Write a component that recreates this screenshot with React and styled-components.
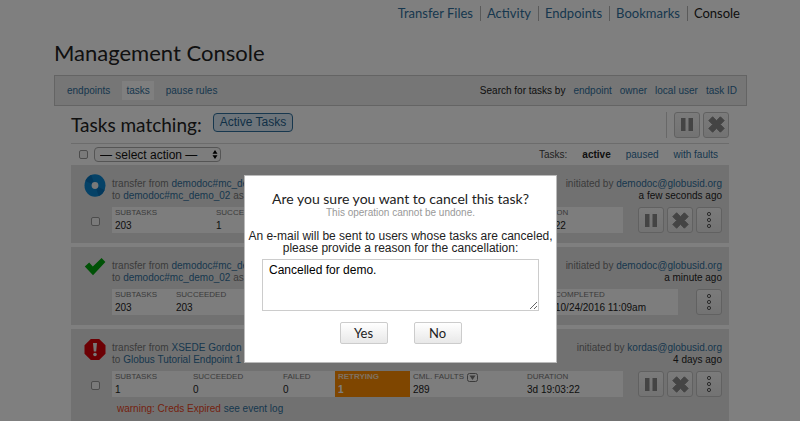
import React from "react";
import styled, { createGlobalStyle } from "styled-components";

const sans = `"Liberation Sans", Arial, sans-serif`;
const display = `Lato, "Open Sans", sans-serif`;
const link = "#2f6f9c";

const GlobalStyle = createGlobalStyle`
  * { box-sizing: border-box; }
  body { margin: 0; background: #fff; color: #222; font: 10px/12px ${sans}; }
  button, input, select, textarea { font-family: inherit; margin: 0; }
  h1, h2, p, dl, dd, dt { margin: 0; }
  svg { display: block; }
`;

const Page = styled.div`
  max-width: 694px;
  margin: 0 auto;
  padding-left: 1px;
`;
const Link = styled.a`
  color: ${(p) => (p.$current ? "#222" : link)};
  font-weight: ${(p) => (p.$strong ? 700 : 400)};
  text-decoration: none;
`;
const SiteNav = styled.nav`
  display: flex;
  justify-content: flex-end;
  padding: 6px 7px 0 0;
  font: 13px/14px ${display};
  a { padding: 0 7px 1px 6px; border-left: 1px solid #b4b4b4; }
  a:first-child { border-left: 0; }
  a:last-child { padding-right: 0; }
`;
const PageTitle = styled.h1`
  margin: 19px 0 9px;
  font: 400 22px/26px ${display};
`;
const TabBar = styled.div`
  display: flex;
  justify-content: space-between;
  align-items: center;
  height: 31px;
  padding: 0 9px 0 8px;
  background: #ececec;
  border: 1px solid #c8c8c8;
`;
const Tabs = styled.nav`
  display: flex;
  gap: 8px;
`;
const Tab = styled(Link)`
  padding: 4px 4px 3px;
  background: ${(p) => (p.$selected ? "#fff" : "transparent")};
`;
const SearchLinks = styled.div`
  display: flex;
  gap: 8px;
`;
const Content = styled.main`
  padding: 0 18px 0 17px;
`;
const Heading = styled.div`
  display: flex;
  align-items: center;
  height: 38px;
  border-bottom: 1px solid #d8d8d8;
`;
const MatchTitle = styled.h2`
  margin-right: 11px;
  font: 400 19px/24px ${display};
`;
const Chip = styled.button`
  height: 19px;
  margin-bottom: 5px;
  padding: 0 6px;
  border: 1px solid ${link};
  border-radius: 4px;
  background: #dcebf7;
  color: #1f5f8c;
  font-size: 12px;
  line-height: 14px;
`;
const Actions = styled.div`
  display: flex;
  flex: none;
  gap: 3px;
  margin-left: auto;
  padding-left: 7px;
  border-left: 1px solid ${(p) => (p.$divided ? "#d0d0d0" : "transparent")};
`;
const IconButton = styled.button`
  display: grid;
  place-items: center;
  width: 26px;
  height: 26px;
  padding: 0;
  border: 1px solid #c2c2c2;
  border-radius: 3px;
  background: linear-gradient(#f6f6f6, #e6e6e6);
  color: #888;
`;
const FilterRow = styled.div`
  display: flex;
  align-items: center;
  height: 21px;
  padding: 0 11px 0 8px;
`;
const Check = styled.input`
  appearance: none;
  width: 9px;
  height: 9px;
  border: 1px solid #999;
  border-radius: 2px;
  background: #f4f4f4;
`;
const SelectWrap = styled.div`
  position: relative;
  width: 127px;
  margin-left: 6px;
  svg { position: absolute; right: 3px; top: 3px; pointer-events: none; }
`;
const Select = styled.select`
  appearance: none;
  display: block;
  width: 100%;
  height: 15px;
  padding: 0 5px;
  border: 1px solid #aaa;
  border-radius: 4px;
  background: #fbfbfb;
  color: #111;
  font-size: 12px;
  line-height: 12px;
`;
const Filters = styled.nav`
  display: flex;
  gap: 15px;
  margin-left: auto;
  color: #444;
`;
const TaskList = styled.div`
  display: grid;
  gap: 4px;
`;
const Card = styled.article`
  display: grid;
  grid-template-columns: 41px minmax(0, 1fr);
  padding: 13px 7px 10px 0;
  background: #e3e3e3;
`;
const Status = styled.div`
  display: flex;
  flex-direction: column;
  align-items: center;
  gap: 20px;
  padding-left: 7px;
  svg { margin-top: -4px; }
`;
const Summary = styled.div`
  display: flex;
  justify-content: space-between;
  color: #777;
`;
const Initiated = styled.div`
  text-align: right;
`;
const Time = styled.div`
  color: #222;
`;
const Details = styled.div`
  display: flex;
  align-items: flex-start;
  margin-top: 5px;
`;
const Stats = styled.dl`
  display: grid;
  flex: 1;
  max-width: ${(p) => p.$max}px;
  grid-template-columns: ${(p) => p.$columns};
  height: 26px;
  background: #fafafa;
`;
const Stat = styled.div`
  min-width: 0;
  padding: 1px 3px 0;
  white-space: nowrap;
  background: ${(p) => (p.$hot ? "#ff8c00" : "transparent")};
  color: ${(p) => (p.$hot ? "#fff" : "#222")};
  dt { display: flex; gap: 3px; align-items: center; font-size: 8px; line-height: 10px;
    color: ${(p) => (p.$hot ? "#ffe3c2" : "#777")}; font-weight: ${(p) => (p.$hot ? 700 : 400)}; }
  dd { line-height: 15px; font-weight: ${(p) => (p.$hot ? 700 : 400)}; }
`;
const Warning = styled.p`
  margin: 6px 0 0 5px;
  color: #e8431c;
`;
const Overlay = styled.div`
  position: fixed;
  inset: 0;
  display: flex;
  justify-content: center;
  align-items: flex-start;
  padding: 175px 0 0 1px;
  background: rgba(0, 0, 0, 0.5);
`;
const Dialog = styled.form`
  width: 313px;
  padding: 14px 0 18px;
  border: 1px solid #bbb;
  background: #fff;
  text-align: center;
`;
const DialogTitle = styled.h2`
  font: 400 14px/17px ${display};
`;
const DialogNote = styled.p`
  line-height: 12px;
  color: #999;
`;
const DialogLabel = styled.label`
  display: block;
  margin-top: 11px;
  font-size: 12px;
  line-height: 12px;
`;
const Reason = styled.textarea`
  display: block;
  width: 277px;
  height: 52px;
  margin: 5px auto 11px;
  padding: 4px 6px;
  border: 1px solid #ccc;
  color: #000;
  font-size: 12px;
  line-height: 13px;
  resize: vertical;
`;
const DialogButtons = styled.div`
  display: flex;
  justify-content: center;
  gap: 26px;
`;
const DialogButton = styled.button`
  width: 48px;
  height: 22px;
  padding: 0;
  border: 1px solid #ccc;
  border-radius: 2px;
  background: linear-gradient(#fff, #e8e8e8);
  color: #222;
  font: 13px/18px ${display};
`;

const Pause = () => (
  <svg width="12" height="13" viewBox="0 0 12 13" fill="currentColor"><path d="M0 0h4.5v13H0zM7.5 0H12v13H7.5z" /></svg>
);
const Cross = () => (
  <svg width="17" height="17" viewBox="0 0 17 17" fill="currentColor">
    <path d="M4.6.8 8.5 4.7 12.4.8 16.2 4.6 12.3 8.5 16.2 12.4 12.4 16.2 8.5 12.3 4.6 16.2.8 12.4 4.7 8.5.8 4.6z" stroke="currentColor" strokeLinejoin="round" />
  </svg>
);
const More = () => (
  <svg width="6" height="18" viewBox="0 0 6 18" fill="none" stroke="#555" strokeWidth="1">
    <circle cx="3" cy="3" r="1.6" /><circle cx="3" cy="9" r="1.6" /><circle cx="3" cy="15" r="1.6" />
  </svg>
);
const ActiveIcon = () => (
  <svg width="22" height="23" viewBox="0 0 22 23">
    <ellipse cx="11" cy="11.5" rx="10.5" ry="11.3" fill="#0b84cf" />
    <path d="M11 11.5 7.2.9A10.5 11.3 0 0 0 1.4 7zM11 11.5l3.8 10.6a10.5 11.3 0 0 0 5.8-6.1z" fill="#0671b8" />
    <circle cx="11" cy="11.5" r="3.4" fill="#f2f2f2" />
  </svg>
);
const DoneIcon = () => (
  <svg width="22" height="23" viewBox="0 0 22 23"><path d="m.8 10.5 4.4-4 3.6 4L17.6 2l3.8 4L9 19.3z" fill="#00a40c" /></svg>
);
const ErrorIcon = () => (
  <svg width="22" height="23" viewBox="0 0 22 23">
    <path d="M6.8 1h8.4l6.3 6.3v8.4L15.2 22H6.8L.5 15.7V7.3z" fill="#d90008" />
    <path d="M9 5h4l-.8 8.5H9.8z" fill="#eee" /><circle cx="11" cy="16.5" r="1.8" fill="#eee" />
  </svg>
);
const FaultMenu = () => (
  <svg width="11" height="9" viewBox="0 0 11 9"><rect x=".5" y=".5" width="10" height="8" rx="2" fill="none" stroke="#777" /><path d="M2.5 2.5h6L5.5 7z" fill="#777" /></svg>
);

const tasks = [
  {
    id: 1, icon: <ActiveIcon />, selectable: true, from: "demodoc#mc_demo_01", to: "demodoc#mc_demo_02", tail: " as",
    owner: "demodoc@globusid.org", time: "a few seconds ago", controls: true,
    max: 511, columns: "101px 1fr 99px",
    stats: [["SUBTASKS", "203"], ["SUCCEEDED", "1"], ["DURATION", "00:00:22"]],
  },
  {
    id: 2, icon: <DoneIcon />, from: "demodoc#mc_demo_01", to: "demodoc#mc_demo_02", tail: " as",
    owner: "demodoc@globusid.org", time: "a minute ago",
    max: 566, columns: "61px 1fr 126px",
    stats: [["SUBTASKS", "203"], ["SUCCEEDED", "203"], ["COMPLETED", "10/24/2016 11:09am"]],
  },
  {
    id: 3, icon: <ErrorIcon />, selectable: true, from: "XSEDE Gordon", to: "Globus Tutorial Endpoint 1", tail: "",
    owner: "kordas@globusid.org", time: "4 days ago", controls: true,
    max: 511, columns: "78px 90px 55px 75px 1fr 99px", warning: "warning: Creds Expired",
    stats: [["SUBTASKS", "1"], ["SUCCEEDED", "0"], ["FAILED", "0"], ["RETRYING", "1", "hot"], ["CML. FAULTS", "289", "menu"], ["DURATION", "3d 19:03:22"]],
  },
];

const PauseButton = () => <IconButton type="button" aria-label="Pause"><Pause /></IconButton>;
const CancelButton = () => <IconButton type="button" aria-label="Cancel"><Cross /></IconButton>;

function Task({ task }) {
  return (
    <Card>
      <Status>
        {task.icon}
        {task.selectable && <Check type="checkbox" aria-label={`Select task ${task.id}`} />}
      </Status>
      <div>
        <Summary>
          <div>
            transfer from <Link href="#">{task.from}</Link><br />
            to <Link href="#">{task.to}</Link>{task.tail}
          </div>
          <Initiated>
            initiated by <Link href="#">{task.owner}</Link>
            <Time>{task.time}</Time>
          </Initiated>
        </Summary>
        <Details>
          <Stats $max={task.max} $columns={task.columns}>
            {task.stats.map(([name, value, kind]) => (
              <Stat key={name} $hot={kind === "hot"}>
                <dt>{name}{kind === "menu" && <FaultMenu />}</dt>
                <dd>{value}</dd>
              </Stat>
            ))}
          </Stats>
          <Actions>
            {task.controls && <><PauseButton /><CancelButton /></>}
            <IconButton type="button" aria-label="More"><More /></IconButton>
          </Actions>
        </Details>
        {task.warning && <Warning>{task.warning} <Link href="#">see event log</Link></Warning>}
      </div>
    </Card>
  );
}

export default function App() {
  return (
    <>
      <GlobalStyle />
      <Page>
        <SiteNav>
          {["Transfer Files", "Activity", "Endpoints", "Bookmarks", "Console"].map((name) => (
            <Link key={name} href="#" $current={name === "Console"}>{name}</Link>
          ))}
        </SiteNav>
        <PageTitle>Management Console</PageTitle>
        <TabBar>
          <Tabs>
            <Tab href="#">endpoints</Tab>
            <Tab href="#" $selected>tasks</Tab>
            <Tab href="#">pause rules</Tab>
          </Tabs>
          <SearchLinks>
            <span>Search for tasks by</span>
            {["endpoint", "owner", "local user", "task ID"].map((name) => <Link key={name} href="#">{name}</Link>)}
          </SearchLinks>
        </TabBar>
        <Content>
          <Heading>
            <MatchTitle>Tasks matching:</MatchTitle>
            <Chip type="button">Active Tasks</Chip>
            <Actions $divided><PauseButton /><CancelButton /></Actions>
          </Heading>
          <FilterRow>
            <Check type="checkbox" aria-label="Select all tasks" />
            <SelectWrap>
              <Select aria-label="Action"><option>— select action —</option></Select>
              <svg width="6" height="9" viewBox="0 0 6 9"><path d="M3 0l2.5 3.7h-5zM3 9L.5 5.3h5z" fill="#000" /></svg>
            </SelectWrap>
            <Filters>
              <span>Tasks:</span>
              <Link href="#" $current $strong>active</Link>
              <Link href="#">paused</Link>
              <Link href="#">with faults</Link>
            </Filters>
          </FilterRow>
          <TaskList>{tasks.map((task) => <Task key={task.id} task={task} />)}</TaskList>
        </Content>
      </Page>
      <Overlay>
        <Dialog role="dialog" aria-modal="true" aria-labelledby="dialog-title">
          <DialogTitle id="dialog-title">Are you sure you want to cancel this task?</DialogTitle>
          <DialogNote>This operation cannot be undone.</DialogNote>
          <DialogLabel htmlFor="reason">
            An e-mail will be sent to users whose tasks are canceled,<br />please provide a reason for the cancellation:
          </DialogLabel>
          <Reason id="reason" defaultValue="Cancelled for demo." />
          <DialogButtons>
            <DialogButton type="button">Yes</DialogButton>
            <DialogButton type="button">No</DialogButton>
          </DialogButtons>
        </Dialog>
      </Overlay>
    </>
  );
}
